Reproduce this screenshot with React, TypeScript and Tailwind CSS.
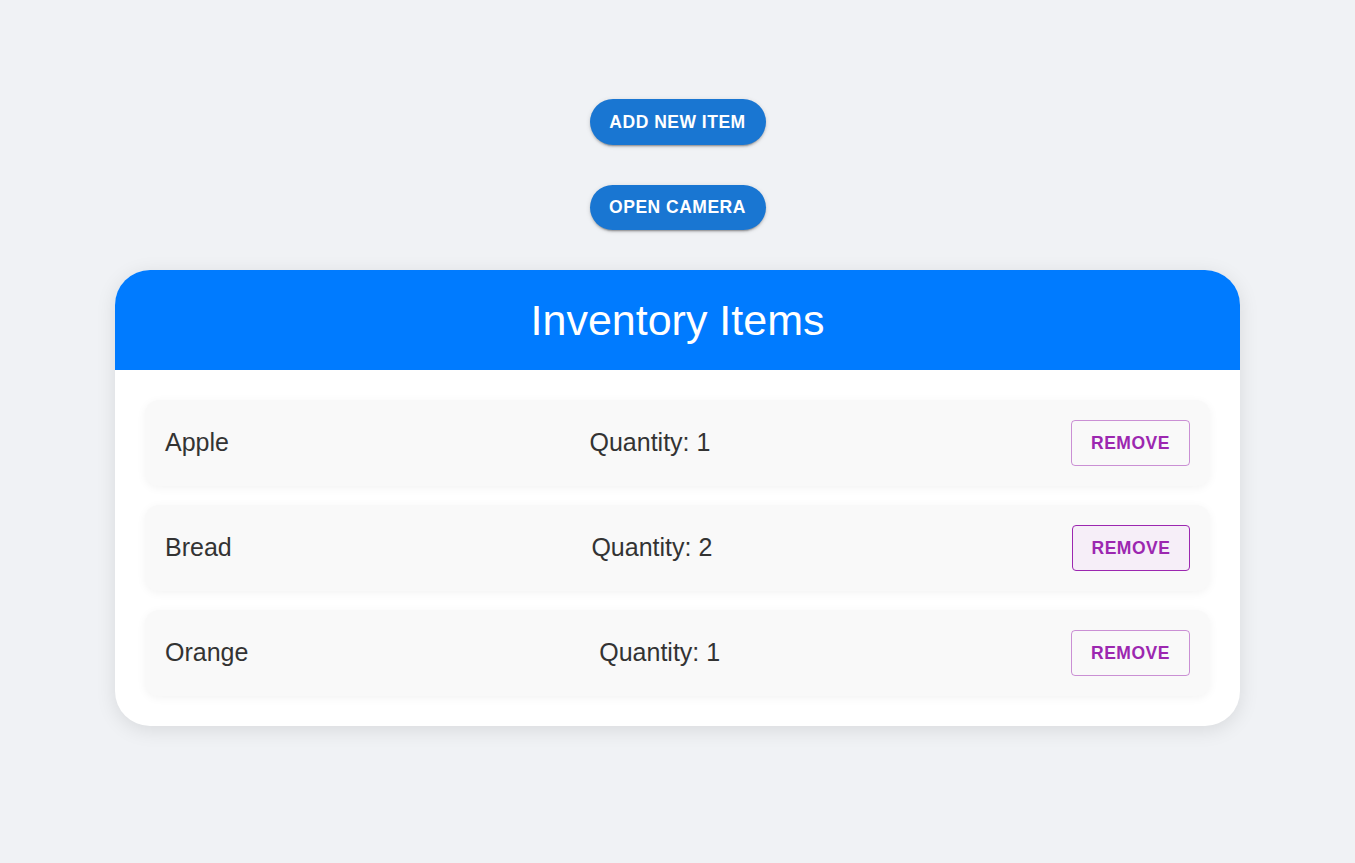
import { useState } from 'react';

interface Item {
  id: number;
  name: string;
  quantity: number;
}

const initialItems: Item[] = [
  { id: 1, name: 'Apple', quantity: 1 },
  { id: 2, name: 'Bread', quantity: 2 },
  { id: 3, name: 'Orange', quantity: 1 },
];

const pillButton =
  "h-[45.5px] w-[176px] rounded-full bg-[#1976d2] text-white text-[17.5px] font-bold uppercase tracking-[0.5px] shadow-[0_3px_1px_-2px_rgba(0,0,0,0.2),0_2px_2px_0_rgba(0,0,0,0.14),0_1px_5px_0_rgba(0,0,0,0.12)] hover:bg-[#1565c0]";

export default function App() {
  const [items, setItems] = useState<Item[]>(initialItems);

  const removeItem = (id: number) => setItems((prev) => prev.filter((i) => i.id !== id));

  return (
    <div className="min-h-screen bg-[#f0f2f5] font-['Liberation_Sans',Arial,sans-serif] flex flex-col items-center pt-[99px] gap-10">
      <button className={pillButton}>Add New Item</button>
      <button className={pillButton}>Open Camera</button>

      <div className="w-[1125px] bg-white rounded-[35px] overflow-hidden shadow-[0_4px_20px_rgba(0,0,0,0.1)]">
        <div className="h-[100px] bg-[#007bff] flex items-center justify-center">
          <h2 className="text-white text-[43px] font-normal leading-none">Inventory Items</h2>
        </div>
        <div className="px-[30px] py-[30px] flex flex-col gap-[19px]">
          {items.map((item, idx) => (
            <div
              key={item.id}
              className="flex items-center justify-between bg-[#f9f9f9] rounded-[14px] px-5 py-5 shadow-[0_2px_10px_rgba(0,0,0,0.05)] text-[#333] text-[25px]"
            >
              <span>{item.name}</span>
              <span>Quantity: {item.quantity}</span>
              <button
                onClick={() => removeItem(item.id)}
                className={
                  idx === 1
                    ? "h-[46px] w-[118px] rounded-[4px] border border-[#9c27b0] bg-[#f6eef8] text-[#9c27b0] text-[17.5px] font-bold uppercase tracking-[0.5px]"
                    : "h-[46px] w-[119px] rounded-[4px] border border-[#9c27b0]/50 bg-transparent text-[#9c27b0] text-[17.5px] font-bold uppercase tracking-[0.5px] hover:border-[#9c27b0] hover:bg-[#9c27b0]/5"
                }
              >
                Remove
              </button>
            </div>
          ))}
        </div>
      </div>
    </div>
  );
}
